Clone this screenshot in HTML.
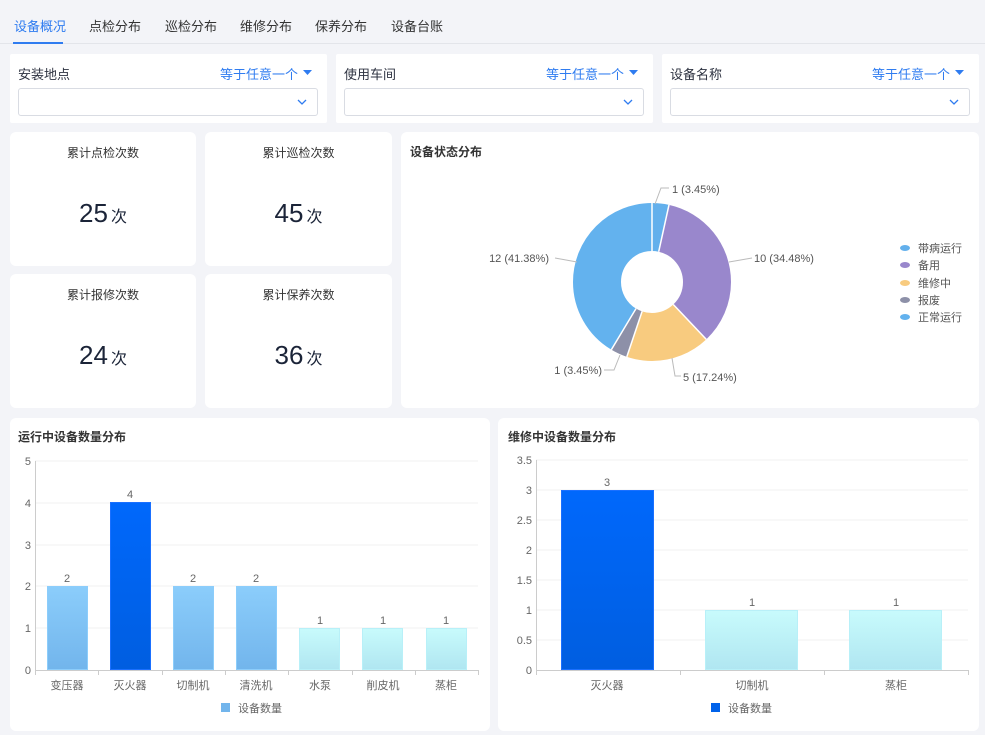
<!DOCTYPE html>
<html><head><meta charset="utf-8"><style>
*{margin:0;padding:0;box-sizing:border-box}
body{width:985px;height:735px;background:#f3f4f8;font-family:"Liberation Sans","Noto Sans CJK SC",sans-serif;position:relative;overflow:hidden;color:#1f2533}
.p{position:absolute;background:#fff;border-radius:6px}
.tab{position:absolute;top:16px;font-size:13px;color:#333}
.fl{position:absolute;font-size:13px;color:#2d3240}
.eq{position:absolute;font-size:13px;color:#2f7cf0}
.sel{position:absolute;height:28px;border:1px solid #d9dce3;border-radius:3px;background:#fff}
.ct{position:absolute;width:100%;text-align:center;top:12px;font-size:12px;color:#333}
.num{position:absolute;width:100%;text-align:center;top:66px;font-size:26px;color:#1b2438}
.num span{font-size:16px;margin-left:3px}
.h{position:absolute;font-size:12px;font-weight:bold;color:#333}
svg text{font-family:"Liberation Sans","Noto Sans CJK SC",sans-serif}
</style></head><body>
<div class="tab" style="left:14px;color:#2f7cf0">设备概况</div>
<div class="tab" style="left:89px">点检分布</div>
<div class="tab" style="left:165px">巡检分布</div>
<div class="tab" style="left:240px">维修分布</div>
<div class="tab" style="left:315px">保养分布</div>
<div class="tab" style="left:391px">设备台账</div>
<div style="position:absolute;left:0;top:43px;width:985px;height:1px;background:#e3e5ea"></div>
<div style="position:absolute;left:13px;top:42px;width:50px;height:2px;background:#2f7cf0"></div>

<div class="p" style="left:10px;top:54px;width:317px;height:69px;border-radius:2px"></div>
<div class="p" style="left:336px;top:54px;width:317px;height:69px;border-radius:2px"></div>
<div class="p" style="left:662px;top:54px;width:317px;height:69px;border-radius:2px"></div>
<div class="fl" style="left:18px;top:64px">安装地点</div>
<div class="fl" style="left:344px;top:64px">使用车间</div>
<div class="fl" style="left:670px;top:64px">设备名称</div>
<div class="eq" style="left:220px;top:64px">等于任意一个</div>
<div class="eq" style="left:546px;top:64px">等于任意一个</div>
<div class="eq" style="left:872px;top:64px">等于任意一个</div>
<div class="sel" style="left:18px;top:88px;width:300px"></div>
<div class="sel" style="left:344px;top:88px;width:300px"></div>
<div class="sel" style="left:670px;top:88px;width:300px"></div>

<div class="p" style="left:10px;top:132px;width:186px;height:134px"><div class="ct">累计点检次数</div><div class="num">25<span>次</span></div></div>
<div class="p" style="left:205px;top:132px;width:187px;height:134px"><div class="ct">累计巡检次数</div><div class="num">45<span>次</span></div></div>
<div class="p" style="left:10px;top:274px;width:186px;height:134px"><div class="ct">累计报修次数</div><div class="num">24<span>次</span></div></div>
<div class="p" style="left:205px;top:274px;width:187px;height:134px"><div class="ct">累计保养次数</div><div class="num">36<span>次</span></div></div>
<div class="p" style="left:401px;top:132px;width:578px;height:276px"></div>
<div class="h" style="left:410px;top:143px">设备状态分布</div>
<div class="p" style="left:10px;top:418px;width:480px;height:313px"></div>
<div class="p" style="left:498px;top:418px;width:481px;height:313px"></div>
<div class="h" style="left:18px;top:428px">运行中设备数量分布</div>
<div class="h" style="left:508px;top:428px">维修中设备数量分布</div>

<svg width="985" height="735" style="position:absolute;left:0;top:0">
<defs>
<linearGradient id="lb" x1="0" y1="0" x2="0" y2="1"><stop offset="0" stop-color="#8bcdfb"/><stop offset="1" stop-color="#72b5ec"/></linearGradient>
<linearGradient id="db" x1="0" y1="0" x2="0" y2="1"><stop offset="0" stop-color="#0068fc"/><stop offset="1" stop-color="#005ee0"/></linearGradient>
<linearGradient id="cy" x1="0" y1="0" x2="0" y2="1"><stop offset="0" stop-color="#c8fbfc"/><stop offset="1" stop-color="#b0e6f1"/></linearGradient>
</defs>
<g fill="#2f7cf0"><path d="M303 70h9l-4.5 5z"/><path d="M629 70h9l-4.5 5z"/><path d="M955 70h9l-4.5 5z"/></g>
<g fill="none" stroke="#2f7cf0" stroke-width="1.3"><path d="M298 100l4 4 4-4"/><path d="M624 100l4 4 4-4"/><path d="M950 100l4 4 4-4"/></g>

<g transform="translate(652 282) rotate(-90)" fill="none" stroke-width="48">
<circle r="55" stroke="#63b0ec" stroke-dasharray="11.92 400" stroke-dashoffset="0"/>
<circle r="55" stroke="#9987cc" stroke-dasharray="119.15 400" stroke-dashoffset="-11.92"/>
<circle r="55" stroke="#f8cb7f" stroke-dasharray="59.58 400" stroke-dashoffset="-131.07"/>
<circle r="55" stroke="#8d90a8" stroke-dasharray="11.92 400" stroke-dashoffset="-190.65"/>
<circle r="55" stroke="#63b2ee" stroke-dasharray="143 400" stroke-dashoffset="-202.57"/>
</g>
<g stroke="#fff" stroke-width="1.5">
<path d="M652 251L652 203M658.7 251.7L669 204.8M673.3 304.5L706.3 339.4M642.1 311.4L626.8 356.9M636 308.6L611.3 349.7"/>
</g>
<g fill="none" stroke="#bbb" stroke-width="1">
<path d="M655 204L661 188H669"/><path d="M729 262L752 258"/><path d="M672 358L675 376H681"/><path d="M620 355L614 370H604"/><path d="M577 262L555 258"/>
</g>
<g font-size="11" fill="#555">
<text x="672" y="193">1 (3.45%)</text><text x="754" y="262">10 (34.48%)</text><text x="683" y="381">5 (17.24%)</text>
<text x="602" y="374" text-anchor="end">1 (3.45%)</text><text x="549" y="262" text-anchor="end">12 (41.38%)</text>
</g>
<g font-size="11" fill="#555">
<ellipse cx="905" cy="248" rx="5" ry="3" fill="#63b0ec"/><text x="918" y="252">带病运行</text>
<ellipse cx="905" cy="265" rx="5" ry="3" fill="#9987cc"/><text x="918" y="269">备用</text>
<ellipse cx="905" cy="283" rx="5" ry="3" fill="#f8cb7f"/><text x="918" y="287">维修中</text>
<ellipse cx="905" cy="300" rx="5" ry="3" fill="#8d90a8"/><text x="918" y="304">报废</text>
<ellipse cx="905" cy="317" rx="5" ry="3" fill="#63b2ee"/><text x="918" y="321">正常运行</text>
</g>

<g stroke="#f0f0f0"><path d="M35 461H478M35 503H478M35 545H478M35 586H478M35 628H478"/></g>
<g stroke="#ccc"><path d="M35.5 461V670M35 670.5H478"/><path d="M35.5 670v5M98.5 670v5M162.5 670v5M225.5 670v5M288.5 670v5M352.5 670v5M415.5 670v5M478.5 670v5"/></g>
<g font-size="11" fill="#666" text-anchor="end"><text x="31" y="465">5</text><text x="31" y="507">4</text><text x="31" y="549">3</text><text x="31" y="590">2</text><text x="31" y="632">1</text><text x="31" y="674">0</text></g>
<g stroke-width="1">
<rect x="47.5" y="586.5" width="40" height="83" fill="url(#lb)" stroke="#8ccdfb"/>
<rect x="110.5" y="502.5" width="40" height="167" fill="url(#db)" stroke="#1a70ff"/>
<rect x="173.5" y="586.5" width="40" height="83" fill="url(#lb)" stroke="#8ccdfb"/>
<rect x="236.5" y="586.5" width="40" height="83" fill="url(#lb)" stroke="#8ccdfb"/>
<rect x="299.5" y="628.5" width="40" height="41" fill="url(#cy)" stroke="#b8f0f8"/>
<rect x="362.5" y="628.5" width="40" height="41" fill="url(#cy)" stroke="#b8f0f8"/>
<rect x="426.5" y="628.5" width="40" height="41" fill="url(#cy)" stroke="#b8f0f8"/>
</g>
<g font-size="11" fill="#666" text-anchor="middle">
<text x="67" y="582">2</text><text x="130" y="498">4</text><text x="193" y="582">2</text><text x="256" y="582">2</text><text x="320" y="624">1</text><text x="383" y="624">1</text><text x="446" y="624">1</text>
<text x="67" y="689">变压器</text><text x="130" y="689">灭火器</text><text x="193" y="689">切制机</text><text x="256" y="689">清洗机</text><text x="320" y="689">水泵</text><text x="383" y="689">削皮机</text><text x="446" y="689">蒸柜</text>
</g>
<rect x="221" y="703" width="9" height="9" fill="#72b5ec"/><text x="238" y="712" font-size="11" fill="#666">设备数量</text>

<g stroke="#f0f0f0"><path d="M536 460H968M536 490H968M536 520H968M536 550H968M536 580H968M536 610H968M536 640H968"/></g>
<g stroke="#ccc"><path d="M536.5 460V670M536 670.5H968"/><path d="M536.5 670v5M680.5 670v5M824.5 670v5M968.5 670v5"/></g>
<g font-size="11" fill="#666" text-anchor="end"><text x="532" y="464">3.5</text><text x="532" y="494">3</text><text x="532" y="524">2.5</text><text x="532" y="554">2</text><text x="532" y="584">1.5</text><text x="532" y="614">1</text><text x="532" y="644">0.5</text><text x="532" y="674">0</text></g>
<rect x="561.5" y="490.5" width="92" height="179" fill="url(#db)" stroke="#1a70ff"/>
<rect x="705.5" y="610.5" width="92" height="59" fill="url(#cy)" stroke="#b8f0f8"/>
<rect x="849.5" y="610.5" width="92" height="59" fill="url(#cy)" stroke="#b8f0f8"/>
<g font-size="11" fill="#666" text-anchor="middle">
<text x="607" y="486">3</text><text x="752" y="606">1</text><text x="896" y="606">1</text>
<text x="607" y="689">灭火器</text><text x="752" y="689">切制机</text><text x="896" y="689">蒸柜</text>
</g>
<rect x="711" y="703" width="9" height="9" fill="#0062ea"/><text x="728" y="712" font-size="11" fill="#666">设备数量</text>
</svg>
</body></html>
